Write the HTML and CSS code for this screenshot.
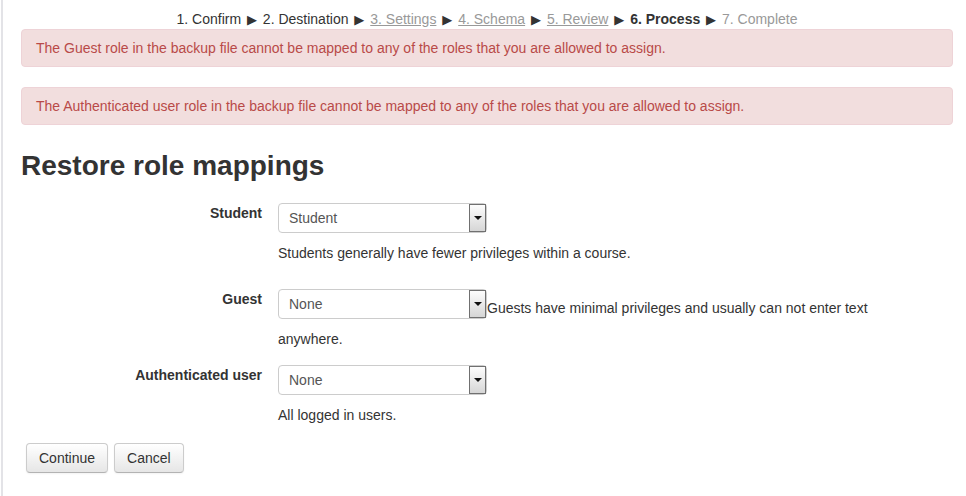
FILE: index.html
```html
<!DOCTYPE html>
<html lang="en">
<head>
<meta charset="utf-8">
<title>Restore role mappings</title>
<link rel="stylesheet" href="styles.css">
</head>
<body>
<div class="page">
  <div class="progress">
    <span class="step">1. Confirm</span> <span class="sep">&#9654;</span>
    <span class="step">2. Destination</span> <span class="sep">&#9654;</span>
    <a class="step done" href="#">3. Settings</a> <span class="sep">&#9654;</span>
    <a class="step done" href="#">4. Schema</a> <span class="sep">&#9654;</span>
    <a class="step done" href="#">5. Review</a> <span class="sep">&#9654;</span>
    <span class="step current">6. Process</span> <span class="sep">&#9654;</span>
    <span class="step future">7. Complete</span>
  </div>

  <div class="alert">The Guest role in the backup file cannot be mapped to any of the roles that you are allowed to assign.</div>
  <div class="alert">The Authenticated user role in the backup file cannot be mapped to any of the roles that you are allowed to assign.</div>

  <h2 class="title">Restore role mappings</h2>

  <div class="form">
    <div class="row row-first">
      <div class="label">Student</div>
      <div class="control">
        <div class="select"><span class="value">Student</span><span class="arrow"><span class="tri"></span></span></div>
        <div class="desc">Students generally have fewer privileges within a course.</div>
      </div>
    </div>

    <div class="row row-second">
      <div class="label">Guest</div>
      <div class="control"><div class="select"><span class="value">None</span><span class="arrow"><span class="tri"></span></span></div>Guests have minimal privileges and usually can not enter text anywhere.</div>
    </div>

    <div class="row row-third">
      <div class="label">Authenticated user</div>
      <div class="control">
        <div class="select"><span class="value">None</span><span class="arrow"><span class="tri"></span></span></div>
        <div class="desc">All logged in users.</div>
      </div>
    </div>

    <div class="buttons">
      <button class="btn" type="button">Continue</button>
      <button class="btn" type="button">Cancel</button>
    </div>
  </div>
</div>
</body>
</html>
```

FILE: styles.css
```css
html, body {
  margin: 0;
  padding: 0;
  background: #ffffff;
}

body {
  font-family: "Liberation Sans", Arial, Helvetica, sans-serif;
  font-size: 14px;
  line-height: 20px;
  color: #333333;
}

.page {
  margin-left: 1px;
  border-left: 2px solid #e3e3e7;
  min-height: 496px;
  box-sizing: border-box;
  padding: 9px 13px 0 18px;
}

.progress {
  text-align: center;
  line-height: 20px;
  height: 20px;
  color: #333333;
}

.progress .sep {
  font-family: "DejaVu Sans", sans-serif;
  font-size: 13px;
  line-height: 0;
  margin: 0 2px;
  color: #333333;
}

.progress .done {
  color: #999999;
  text-decoration: underline;
}

.progress .current {
  font-weight: bold;
}

.progress .future {
  color: #999999;
}

.alert {
  background: #f2dede;
  border: 1px solid #eed3d7;
  border-radius: 4px;
  color: #b94a48;
  padding: 8px 14px;
  margin-bottom: 20px;
}

.title {
  font-size: 28px;
  line-height: 40px;
  font-weight: bold;
  color: #333333;
  margin: 21px 0 17px;
}

.row {
  display: grid;
  grid-template-columns: 241px 620px;
  column-gap: 16px;
}

.row-first {
  margin-bottom: 26px;
}

.row-second {
  margin-bottom: 16px;
}

.row-third {
  margin-bottom: 18px;
}

.label {
  text-align: right;
  font-weight: bold;
}

.select {
  display: inline-flex;
  vertical-align: middle;
  width: 209px;
  height: 30px;
  box-sizing: border-box;
  border: 1px solid #cccccc;
  border-radius: 4px;
  background: #ffffff;
  margin-bottom: 10px;
}

.select .value {
  flex: 1;
  padding-left: 10px;
  line-height: 28px;
  color: #555555;
}

.select .arrow {
  width: 17px;
  box-sizing: border-box;
  border: 1px solid #707070;
  background: linear-gradient(#fdfdfd, #d6d6d6);
  display: flex;
  align-items: center;
  justify-content: center;
}

.select .tri {
  width: 0;
  height: 0;
  border-left: 4px solid transparent;
  border-right: 4px solid transparent;
  border-top: 4px solid #111111;
}

.desc {
  line-height: 20px;
}

.buttons {
  display: flex;
  gap: 6px;
  padding-left: 5px;
}

.btn {
  height: 30px;
  box-sizing: border-box;
  padding: 0 12px;
  border: 1px solid #cccccc;
  border-bottom-color: #b3b3b3;
  border-radius: 4px;
  background: linear-gradient(#ffffff, #e6e6e6);
  font-family: "Liberation Sans", Arial, Helvetica, sans-serif;
  font-size: 14px;
  line-height: 28px;
  color: #333333;
  box-shadow: 0 1px 2px rgba(0, 0, 0, 0.05);
}
```
